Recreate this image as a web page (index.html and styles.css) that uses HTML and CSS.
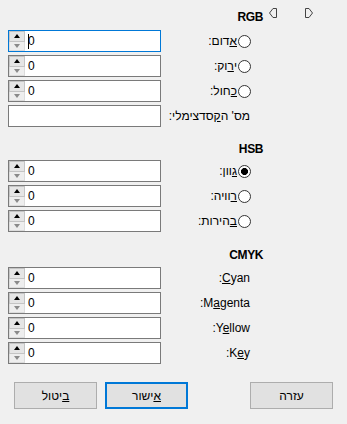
FILE: index.html
```html
<!DOCTYPE html>
<html lang="he" dir="rtl">
<head>
    <meta charset="UTF-8">
    <meta name="viewport" content="width=device-width, initial-scale=1.0">
    <title>בחירת צבע</title>
    <link rel="stylesheet" href="styles.css">
</head>
<body>
    <div class="dialog">
        <div class="head head-top">
            <span class="nav">
                <svg class="tri" width="8" height="10" viewBox="0 0 8 10"><path d="M0.5 0.5 H4 L7.5 5 L4 9.5 H0.5 Z"/></svg>
                <svg class="tri" width="8" height="10" viewBox="0 0 8 10"><path d="M7.5 0.5 H4 L0.5 5 L4 9.5 H7.5 Z"/></svg>
            </span>
            <span class="title">RGB</span>
        </div>

        <div class="row">
            <label class="lbl"><span class="radio"></span><span><u>א</u>דום:</span></label>
            <div class="box focus">
                <span class="spin"><span class="up"></span><span class="dn"></span></span>
                <span class="val"><span class="caret"></span>0</span>
            </div>
        </div>
        <div class="row">
            <label class="lbl"><span class="radio"></span><span>י<u>ר</u>וק:</span></label>
            <div class="box">
                <span class="spin"><span class="up"></span><span class="dn"></span></span>
                <span class="val">0</span>
            </div>
        </div>
        <div class="row">
            <label class="lbl"><span class="radio"></span><span><u>כ</u>חול:</span></label>
            <div class="box">
                <span class="spin"><span class="up"></span><span class="dn"></span></span>
                <span class="val">0</span>
            </div>
        </div>
        <div class="row">
            <label class="lbl plain"><span>מס' ה<u>ק</u>סדצימלי:</span></label>
            <div class="box"></div>
        </div>

        <div class="head">
            <span class="title">HSB</span>
        </div>
        <div class="row">
            <label class="lbl"><span class="radio checked"></span><span><u>ג</u>וון:</span></label>
            <div class="box">
                <span class="spin"><span class="up"></span><span class="dn"></span></span>
                <span class="val">0</span>
            </div>
        </div>
        <div class="row">
            <label class="lbl"><span class="radio"></span><span><u>ר</u>וויה:</span></label>
            <div class="box">
                <span class="spin"><span class="up"></span><span class="dn"></span></span>
                <span class="val">0</span>
            </div>
        </div>
        <div class="row">
            <label class="lbl"><span class="radio"></span><span><u>ב</u>הירות:</span></label>
            <div class="box">
                <span class="spin"><span class="up"></span><span class="dn"></span></span>
                <span class="val">0</span>
            </div>
        </div>

        <div class="head head-cmyk">
            <span class="title">CMYK</span>
        </div>
        <div class="row">
            <label class="lbl plain"><span><u>C</u>yan:</span></label>
            <div class="box">
                <span class="spin"><span class="up"></span><span class="dn"></span></span>
                <span class="val">0</span>
            </div>
        </div>
        <div class="row">
            <label class="lbl plain"><span>M<u>a</u>genta:</span></label>
            <div class="box">
                <span class="spin"><span class="up"></span><span class="dn"></span></span>
                <span class="val">0</span>
            </div>
        </div>
        <div class="row">
            <label class="lbl plain"><span>Y<u>e</u>llow:</span></label>
            <div class="box">
                <span class="spin"><span class="up"></span><span class="dn"></span></span>
                <span class="val">0</span>
            </div>
        </div>
        <div class="row">
            <label class="lbl plain"><span>K<u>e</u>y:</span></label>
            <div class="box">
                <span class="spin"><span class="up"></span><span class="dn"></span></span>
                <span class="val">0</span>
            </div>
        </div>

        <div class="buttons">
            <button class="btn help">עזרה</button>
            <button class="btn default"><u>א</u>ישור</button>
            <button class="btn"><u>ב</u>יטול</button>
        </div>
    </div>
</body>
</html>
```

FILE: styles.css
```css
body {
    margin: 0;
    background-color: #f0f0f0;
    font-family: "Liberation Sans", "DejaVu Sans", sans-serif;
    font-size: 12px;
    color: #000;
}

.dialog {
    width: 347px;
    box-sizing: border-box;
    padding: 7px 14px 0 8px;
}

/* section titles */
.head {
    display: flex;
    align-items: center;
    height: 19px;
    margin-top: 11px;
    padding-right: 70px;
}

.head-top {
    margin-top: 0;
    margin-bottom: 2px;
    padding-right: 20px;
}

.head-cmyk {
    margin-top: 12px;
    margin-bottom: 1px;
}

.title {
    font-weight: bold;
    letter-spacing: -0.4px;
}

.nav {
    display: flex;
    gap: 28px;
    margin-left: 6px;
    align-self: flex-start;
    padding-top: 1px;
}

.tri path {
    fill: none;
    stroke: #444;
    stroke-width: 1;
}

/* rows */
.row {
    display: flex;
    height: 25px;
    padding-right: 82px;
}

.lbl {
    display: flex;
    align-items: center;
    gap: 1px;
    height: 22px;
    margin-top: 2px;
    white-space: nowrap;
}

.lbl.plain {
    margin-right: 1px;
}

.radio {
    width: 13px;
    height: 13px;
    box-sizing: border-box;
    border: 1px solid #333;
    border-radius: 50%;
    background-color: #fff;
}

.radio.checked {
    background: radial-gradient(circle, #000 3.2px, #fff 3.8px);
}

.box {
    direction: ltr;
    display: flex;
    align-items: center;
    width: 153px;
    height: 22px;
    margin-top: 2px;
    margin-right: auto;
    box-sizing: border-box;
    border: 1px solid #7a7a7a;
    background-color: #fff;
}

.box.focus {
    border-color: #0078d7;
}

.spin {
    display: flex;
    flex-direction: column;
    width: 16px;
    height: 20px;
}

.spin span {
    flex: 1;
    display: flex;
    align-items: center;
    justify-content: center;
    box-sizing: border-box;
}

.spin .up {
    background-color: #e5e5e5;
    border: 1px solid #c4c4c4;
}

.spin .dn {
    background-color: #eeeeee;
    border: 1px solid #dcdcdc;
    border-top: none;
}

.spin .up::after,
.spin .dn::after {
    content: "";
    width: 0;
    height: 0;
    border-left: 3px solid transparent;
    border-right: 3px solid transparent;
}

.spin .up::after {
    border-bottom: 4px solid #000;
}

.spin .dn::after {
    border-top: 4px solid #8a8a8a;
}

.val {
    margin-left: 3px;
    display: flex;
    align-items: center;
}

.caret {
    display: inline-block;
    width: 1px;
    height: 15px;
    margin-right: -1px;
    background-color: #000;
}

/* bottom buttons */
.buttons {
    display: flex;
    gap: 8px;
    margin-top: 17px;
    padding-left: 6px;
}

.btn {
    width: 83px;
    height: 27px;
    box-sizing: border-box;
    border: 1px solid #adadad;
    background-color: #e1e1e1;
    font-family: inherit;
    font-size: 12px;
    color: #000;
    padding: 0;
}

.btn.help {
    margin-left: auto;
}

.btn.default {
    border: 2px solid #0078d7;
}
```
